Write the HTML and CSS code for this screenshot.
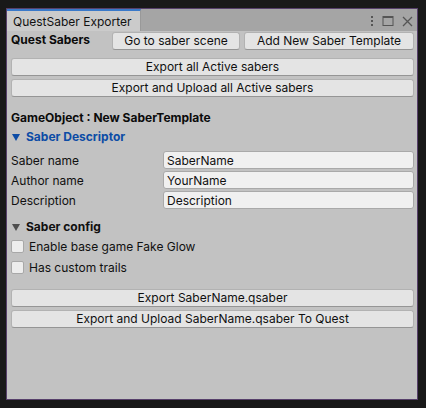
FILE: index.html
```html
<!DOCTYPE html>
<html>
<head>
<meta charset="utf-8">
<link rel="stylesheet" href="styles.css">
</head>
<body>
<div class="window">
  <div class="tabbar">
    <div class="tab">QuestSaber Exporter</div>
    <div class="tab-icons">
      <svg width="4" height="12" viewBox="0 0 4 12"><rect x="1" y="1" width="2" height="2" fill="#555"/><rect x="1" y="5" width="2" height="2" fill="#555"/><rect x="1" y="9" width="2" height="2" fill="#555"/></svg>
      <svg width="12" height="12" viewBox="0 0 12 12"><rect x="1" y="1.5" width="10" height="9" fill="none" stroke="#555" stroke-width="1"/><rect x="1" y="1" width="10" height="2" fill="#555"/></svg>
      <svg width="11" height="11" viewBox="0 0 11 11"><path d="M1 1 L10 10 M10 1 L1 10" stroke="#555" stroke-width="1.3"/></svg>
    </div>
  </div>
  <div class="content">
    <div class="row top-row">
      <div class="bold-label">Quest Sabers</div>
      <div class="btn btn-scene">Go to saber scene</div>
      <div class="btn btn-add">Add New Saber Template</div>
    </div>
    <div class="btn full first-export">Export all Active sabers</div>
    <div class="btn full">Export and Upload all Active sabers</div>

    <div class="bold-label go-title">GameObject : New SaberTemplate</div>
    <div class="foldout blue"><span class="tri"></span>Saber Descriptor</div>

    <div class="field-row fr-first"><div class="flabel">Saber name</div><div class="input">SaberName</div></div>
    <div class="field-row"><div class="flabel">Author name</div><div class="input">YourName</div></div>
    <div class="field-row"><div class="flabel">Description</div><div class="input">Description</div></div>

    <div class="foldout config"><span class="tri dark"></span>Saber config</div>
    <div class="check-row cr-first"><span class="box"></span>Enable base game Fake Glow</div>
    <div class="check-row"><span class="box"></span>Has custom trails</div>

    <div class="btn full export-one">Export SaberName.qsaber</div>
    <div class="btn full">Export and Upload SaberName.qsaber To Quest</div>
  </div>
</div>
</body>
</html>
```
FILE: styles.css
```css
html, body {
  margin: 0;
  padding: 0;
  background: #191919;
  width: 426px;
  height: 408px;
  overflow: hidden;
  font-family: Inter, "Noto Sans", sans-serif;
  font-size: 12px;
  color: #101010;
}
.window {
  position: relative;
  margin: 8px 0 0 6px;
  width: 410px;
  height: 390px;
  border: 1px solid #57406b;
  background: #c2c2c2;
  display: flex;
  flex-direction: column;
}
.tabbar {
  height: 22px;
  background: #a5a5a5;
  display: flex;
  align-items: stretch;
  justify-content: space-between;
}
.tab {
  width: 134px;
  background: #cbcbcb;
  border-top: 2px solid #3a79c9;
  border-right: 1px solid #999;
  box-sizing: border-box;
  padding: 3px 0 0 6px;
  font-size: 12px;
  color: #111;
}
.tab-icons {
  display: flex;
  align-items: center;
  gap: 8px;
  padding: 2px 4px 0 0;
}
.content {
  padding: 1px 3px 0 4px;
  display: flex;
  flex-direction: column;
}
.row {
  display: flex;
  align-items: center;
}
.bold-label {
  font-weight: 700;
  color: #0b0b0b;
}
.top-row .bold-label {
  width: 101px;
  margin-top: -3px;
}
.btn {
  height: 18px;
  box-sizing: border-box;
  background: #e4e4e4;
  border: 1px solid #b2b2b2;
  border-bottom-color: #959595;
  border-radius: 3px;
  display: flex;
  align-items: center;
  justify-content: center;
  color: #101010;
  line-height: 1;
}
.btn-scene { width: 128px; }
.btn-add { width: 170px; margin-left: 4px; }
.full { margin-top: 3px; }
.first-export { margin-top: 8px; }
.go-title { margin-top: 13px; line-height: 16px; }
.foldout {
  display: flex;
  align-items: center;
  font-weight: 700;
  line-height: 16px;
  margin-top: 3px;
}
.blue { color: #0c4ca6; }
.tri {
  width: 0;
  height: 0;
  border-left: 4px solid transparent;
  border-right: 4px solid transparent;
  border-top: 7px solid #0c4ca6;
  margin: 1px 6px 0 1px;
}
.tri.dark { border-top-color: #4e4e4e; }
.field-row {
  display: flex;
  align-items: center;
  height: 18px;
  margin-top: 2px;
}
.fr-first { margin-top: 6px; }
.flabel { width: 152px; }
.input {
  flex: 1;
  height: 18px;
  box-sizing: border-box;
  background: #f0f0f0;
  border: 1px solid #a9a9a9;
  border-radius: 3px;
  padding: 0 3px;
  display: flex;
  align-items: center;
  color: #101010;
}
.config { margin-top: 10px; }
.check-row {
  display: flex;
  align-items: center;
  height: 18px;
  margin-top: 3px;
}
.cr-first { margin-top: 2px; }
.box {
  width: 13px;
  height: 13px;
  box-sizing: border-box;
  background: #ededed;
  border: 1px solid #a8a8a8;
  border-radius: 2px;
  margin-right: 5px;
}
.export-one { margin-top: 13px; }
```
